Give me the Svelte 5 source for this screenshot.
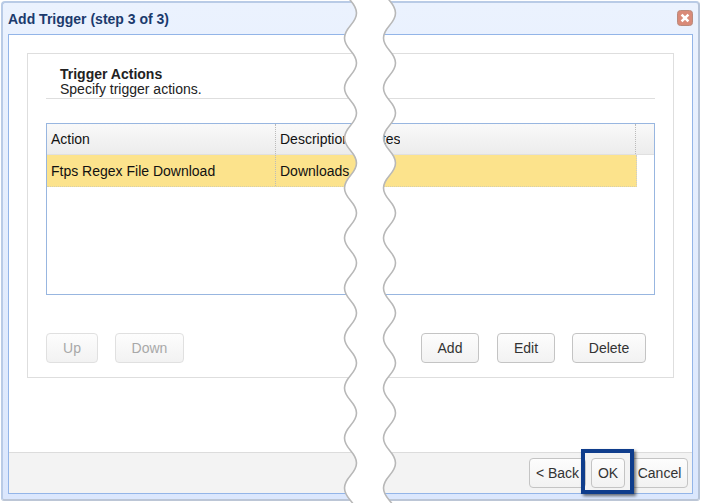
<script lang="ts">
  const leftColWidth = 228;

  // one edge of the torn strip: period 50px, swings between x and x + amp,
  // returned as knots so the white fill can walk back up the other edge
  const knots: number[] = [];
  for (let y = -12; y < 520; y += 25) knots.push(y);

  function xAt(y: number, x: number, amp: number): number {
    return (y - 13) % 50 === 0 ? x + amp : x;
  }

  function down(x: number, amp: number): string {
    let d = '';
    for (let i = 1; i < knots.length; i++) {
      const from = knots[i - 1];
      const to = knots[i];
      d += ` C ${xAt(from, x, amp)} ${from + 11} ${xAt(to, x, amp)} ${to - 11} ${xAt(to, x, amp)} ${to}`;
    }
    return d;
  }

  function up(x: number, amp: number): string {
    let d = '';
    for (let i = knots.length - 1; i > 0; i--) {
      const from = knots[i];
      const to = knots[i - 1];
      d += ` C ${xAt(from, x, amp)} ${from - 11} ${xAt(to, x, amp)} ${to + 11} ${xAt(to, x, amp)} ${to}`;
    }
    return d;
  }

  const leftEdge = `M ${xAt(-12, 344.5, 12)} -12${down(344.5, 12)}`;
  const rightEdge = `M ${xAt(-12, 383.5, 12)} -12${down(383.5, 12)}`;
  const strip = `${leftEdge} L ${xAt(knots[knots.length - 1], 383.5, 12)} ${knots[knots.length - 1]}${up(383.5, 12)} Z`;
</script>

<div class="page">
  <div class="window">
    <header class="titlebar">
      <span class="title">Add Trigger (step 3 of 3)</span>
      <button type="button" class="close" aria-label="Close">
        <svg viewBox="0 0 16 16" width="16" height="16" aria-hidden="true">
          <rect x="0.5" y="0.5" width="15" height="15" rx="3" fill="#d98a78" stroke="#b98a7c" />
          <path d="M4.6 4.6 L11.4 11.4 M11.4 4.6 L4.6 11.4" stroke="#fff" stroke-width="2.6" />
        </svg>
      </button>
    </header>

    <div class="frame">
      <div class="body">
        <section class="group">
          <div class="group-head">
            <h3>Trigger Actions</h3>
            <p>Specify trigger actions.</p>
          </div>

          <div class="grid">
            <div class="grid-head" style:grid-template-columns="{leftColWidth}px 85px 40px 1fr 19px">
              <span class="cell">Action</span>
              <span class="cell sep">Description</span>
              <span class="cell">Notes</span>
              <span class="cell"></span>
              <span class="cell sep"></span>
            </div>
            <div class="grid-row" style:grid-template-columns="{leftColWidth}px 1fr">
              <span class="cell">Ftps Regex File Download</span>
              <span class="cell sep">Downloads a file</span>
            </div>
          </div>

          <div class="actions">
            <button type="button" class="btn up" disabled>Up</button>
            <button type="button" class="btn down" disabled>Down</button>
            <span class="spacer"></span>
            <button type="button" class="btn add">Add</button>
            <button type="button" class="btn edit">Edit</button>
            <button type="button" class="btn delete">Delete</button>
          </div>
        </section>
      </div>

      <footer class="footer">
        <button type="button" class="btn back">&lt; Back</button>
        <span class="ok-wrap">
          <button type="button" class="btn ok">OK</button>
          <span class="callout"></span>
        </span>
        <button type="button" class="btn cancel">Cancel</button>
      </footer>
    </div>
  </div>

  <svg class="tear" viewBox="0 0 702 503" width="702" height="503" aria-hidden="true">
    <defs>
      <filter id="soft" x="-10%" y="-2%" width="120%" height="104%">
        <feGaussianBlur stdDeviation="0.5" />
      </filter>
    </defs>
    <path d={strip} fill="#fff" />
    <path d={leftEdge} fill="none" stroke="#b8b8b8" stroke-width="1.6" filter="url(#soft)" />
    <path d={rightEdge} fill="none" stroke="#b8b8b8" stroke-width="1.6" filter="url(#soft)" />
  </svg>
</div>

<style>
  :global(body) {
    margin: 0;
    background: #fff;
  }
  .page {
    position: relative;
    width: 702px;
    height: 503px;
    overflow: hidden;
    font-family: "Liberation Sans", Arial, sans-serif;
    font-size: 14px;
    color: #111;
  }
  .window {
    box-sizing: border-box;
    width: 699px;
    height: 500px;
    margin: 1px 0 0 1px;
    padding: 0 5px 5px 5px;
    display: flex;
    flex-direction: column;
    background: linear-gradient(180deg, #ebf2fe, #dbe7fd);
    border: 2px solid #b9cbe6;
    border-right-color: #b7c4d8;
    border-bottom-color: #bcc6d6;
    border-radius: 4px 4px 3px 3px;
  }
  .titlebar {
    flex: 0 0 31px;
    display: flex;
    align-items: center;
    justify-content: space-between;
  }
  .title {
    font-size: 14px;
    font-weight: 700;
    color: #1b3a6d;
  }
  .close {
    width: 16px;
    height: 16px;
    padding: 0;
    border: none;
    background: none;
    display: block;
    line-height: 0;
    margin-top: -1px;
  }
  .frame {
    flex: 1;
    min-height: 0;
    display: flex;
    flex-direction: column;
    background: #fff;
    border: 1px solid #93b5e8;
  }
  .body {
    flex: 1;
    padding: 18px 18px 0;
  }
  .group {
    box-sizing: border-box;
    height: 325px;
    padding: 0 18px;
    border: 1px solid #dedede;
    display: flex;
    flex-direction: column;
  }
  .group-head {
    height: 45px;
    box-sizing: border-box;
    padding: 13px 0 0 14px;
    border-bottom: 1px solid #dedede;
    line-height: 15px;
    color: #222;
  }
  .group-head h3 {
    margin: 0;
    font-size: 14px;
    font-weight: 700;
  }
  .group-head p {
    margin: 0;
    font-size: 14px;
  }
  .grid {
    box-sizing: border-box;
    height: 172px;
    margin-top: 24px;
    border: 1px solid #98b6e0;
  }
  .grid-head {
    display: grid;
    height: 31px;
    box-sizing: border-box;
    background: linear-gradient(180deg, #f9f9f9, #ececec);
    border-bottom: 1px solid #e0e0e0;
  }
  .grid-row {
    display: grid;
    width: 590px;
    height: 32px;
    background: #fce38c;
    border-right: 1px dotted #ccc;
    border-bottom: 1px dotted #d8d0a8;
    box-sizing: border-box;
  }
  .cell {
    display: flex;
    align-items: center;
    padding-left: 4px;
    white-space: nowrap;
    overflow: hidden;
  }
  .sep {
    border-left: 1px dotted #bbb;
  }
  .actions {
    display: flex;
    gap: 17px;
    margin-top: 38px;
    padding-right: 9px;
  }
  .spacer {
    flex: 1;
  }
  .btn {
    box-sizing: border-box;
    height: 30px;
    padding: 0;
    font: inherit;
    color: #333;
    border: 1px solid #c4c4c4;
    border-radius: 4px;
    background: linear-gradient(180deg, #fdfdfd, #f2f2f2);
  }
  .btn:disabled {
    color: #a8a8a8;
    border-color: #e0e0e0;
  }
  .up { width: 52px; }
  .down { width: 69px; }
  .add { width: 58px; }
  .edit { width: 58px; margin-left: 1px; }
  .delete { width: 74px; }
  .footer {
    flex: 0 0 41px;
    display: flex;
    align-items: center;
    justify-content: flex-end;
    padding-right: 4px;
    box-sizing: border-box;
    background: #f3f3f3;
    border-top: 1px solid #dcdcdc;
  }
  .back { width: 57px; }
  .ok-wrap {
    position: relative;
    display: block;
    width: 34px;
    margin: 0 6px 0 5px;
  }
  .ok { width: 34px; display: block; }
  .cancel { width: 57px; }
  .callout {
    position: absolute;
    left: -10px;
    top: -9px;
    width: 53px;
    height: 45px;
    box-sizing: border-box;
    border: 4px solid #0f3d8c;
    box-shadow: 2px 2px 3px rgba(0, 0, 0, 0.55);
  }
  .tear {
    position: absolute;
    left: 0;
    top: 0;
  }
</style>
